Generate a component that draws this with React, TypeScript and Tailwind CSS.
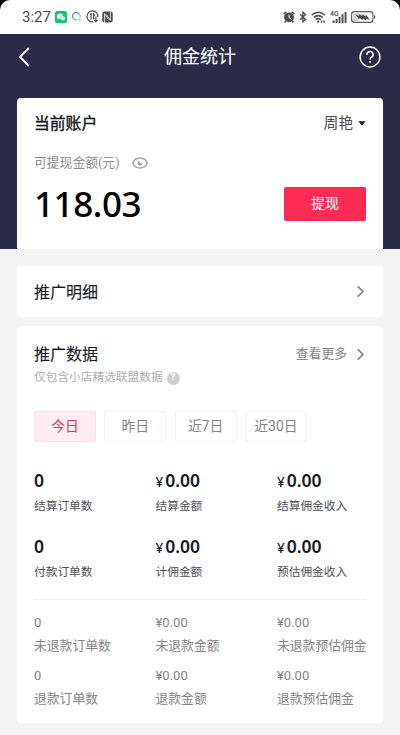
import React, { useState } from 'react';

interface Stat {
  value: string;
  label: string;
  money?: boolean;
}

const ranges = ['今日', '昨日', '近7日', '近30日'];

const mainStats: Stat[] = [
  { value: '0', label: '结算订单数' },
  { value: '0.00', label: '结算金额', money: true },
  { value: '0.00', label: '结算佣金收入', money: true },
  { value: '0', label: '付款订单数' },
  { value: '0.00', label: '计佣金额', money: true },
  { value: '0.00', label: '预估佣金收入', money: true },
];

const refundStats: Stat[] = [
  { value: '0', label: '未退款订单数' },
  { value: '0.00', label: '未退款金额', money: true },
  { value: '0.00', label: '未退款预估佣金', money: true },
  { value: '0', label: '退款订单数' },
  { value: '0.00', label: '退款金额', money: true },
  { value: '0.00', label: '退款预估佣金', money: true },
];

function ChevronRight() {
  return (
    <svg className="w-[9px] h-[13px] mr-px" viewBox="0 0 9 13" fill="none" stroke="#858585" strokeWidth={1.7}>
      <path d="M1.7 1.3 L7 6.5 L1.7 11.7" />
    </svg>
  );
}

function StatusBar() {
  return (
    <div className="bg-black">
      <div className="flex items-center justify-between h-[33.5px] pl-[22px] pr-[24px] rounded-t-[10px] bg-white text-[#4c4c4c]">
        <div className="flex items-center">
          <span className="text-[15px] leading-[18px] w-[33px]">3:27</span>
          {/* WeChat */}
          <svg className="w-3 h-3" viewBox="0 0 12 12">
            <rect width="12" height="12" rx="2.6" fill="#0bcb68" />
            <ellipse cx="4.9" cy="5" rx="3.1" ry="2.6" fill="#fff" />
            <path d="M2.9 6.8 L2.5 8.4 L4.4 7.4 Z" fill="#fff" />
            <ellipse cx="7.7" cy="7.2" rx="2.6" ry="2.2" fill="#fff" stroke="#0bcb68" strokeWidth=".5" />
            <g fill="#0bcb68">
              <circle cx="3.9" cy="4.4" r=".45" />
              <circle cx="5.9" cy="4.4" r=".45" />
              <circle cx="6.9" cy="6.8" r=".35" />
              <circle cx="8.5" cy="6.8" r=".35" />
            </g>
          </svg>
          {/* Chat ring */}
          <svg className="ml-[5px] w-[10px] h-[10px]" viewBox="0 0 10 10" fill="none" strokeWidth="1.1">
            <path d="M1.5 6.6 A3.6 3.4 0 0 1 6.8 1.7" stroke="#4b82c9" />
            <path d="M6.8 1.7 A3.5 3.4 0 0 1 8.2 5.2" stroke="#55b6c4" />
            <path d="M1.5 6.6 Q2.7 8.3 5.5 7.8" stroke="#6fbd8c" />
            <path d="M7.8 5.8 V8.8 M6.2 7.3 H9.3" stroke="#e9c56c" />
          </svg>
          {/* Data rate */}
          <svg className="ml-1 w-[13px] h-[13px]" viewBox="0 0 13 13" fill="none" stroke="#4c4c4c" strokeWidth="1.2">
            <path d="M7.2 11.9 A5.5 5.5 0 1 1 11.9 7.2" />
            <path d="M3.7 4.7 L5.1 3.8 V9.2 M7.5 3 V9.3 M7.5 6.4 L9 4.6 M9.9 6.5 V11.5 M8.2 10 L9.9 11.6 L11.6 10" />
          </svg>
          {/* NFC */}
          <svg className="ml-[3px] w-[11px] h-3" viewBox="0 0 11 12" fill="none">
            <rect x=".3" y=".4" width="10.4" height="11.2" rx="2" fill="#4c4c4c" />
            <path d="M2.6 11.6 V2.6 L6.4 8.4 M8.4 .4 V9.4 L4.6 3.6" stroke="#fff" strokeWidth=".8" />
          </svg>
        </div>

        <div className="flex items-center">
          {/* Alarm */}
          <svg className="w-3 h-3" viewBox="0 0 12 12">
            <circle cx="6" cy="6.3" r="4.9" fill="#4c4c4c" />
            <path d="M.6 3.2 L3.1 .9 M11.4 3.2 L8.9 .9 M2.8 10 L1.6 11.5 M9.2 10 L10.4 11.5" stroke="#4c4c4c" strokeWidth="1.5" />
            <path d="M6 3.6 V6.6 L8.3 8.1" fill="none" stroke="#fff" strokeWidth="1" />
          </svg>
          {/* Bluetooth */}
          <svg className="ml-1 w-2 h-3" viewBox="0 0 8 12" fill="none" stroke="#4c4c4c" strokeWidth="1.3">
            <path d="M1 3.2 L6.6 8.4 L3.9 10.8 V1.2 L6.6 3.6 L1 8.8" />
          </svg>
          {/* Wifi */}
          <svg className="ml-1 w-[15px] h-3" viewBox="0 0 15 12" fill="none" stroke="#4c4c4c" strokeWidth="1.5">
            <path d="M.6 4.2 Q7.3 -1.8 14 4.2 M2.8 6.6 Q7.3 2.7 11.8 6.6 M4.8 8.7 Q7.3 6.6 9.6 8.6" />
            <g fill="#4c4c4c" stroke="none">
              <circle cx="7.2" cy="10.6" r="1.2" />
              <rect x="9.7" y="9.7" width="1.6" height="2" />
              <rect x="12.3" y="9.7" width="1.6" height="2" />
            </g>
          </svg>
          {/* Mobile signal */}
          <div className="relative ml-1 w-[17px] h-3">
            <span className="absolute left-0 -top-px text-[7px] leading-[8px] font-medium">4G</span>
            <svg className="w-[17px] h-3" viewBox="0 0 17 12" fill="#4c4c4c">
              <rect x="2.6" y="9.4" width="1.9" height="2.6" />
              <rect x="5.6" y="8" width="1.9" height="4" />
              <rect x="8.6" y="5.8" width="1.9" height="6.2" />
              <rect x="11.6" y="3.2" width="1.9" height="8.8" />
              <rect x="14.6" y="1" width="1.9" height="11" />
            </svg>
          </div>
          {/* Battery */}
          <svg className="ml-1 w-[25px] h-3" viewBox="0 0 25 12">
            <rect x=".6" y=".6" width="21.3" height="10.8" rx="2.7" fill="#fff" stroke="#5a5a5a" strokeWidth="1.1" />
            <rect x="2" y="2" width="6.5" height="8" rx="1.4" fill="#d8d8d8" />
            <path d="M4 3.1 L8 5 L8.3 3 L11.2 4.9 L11.6 3 L14.6 5.4 L15 3.4 L19 9.2 L15.4 7.8 L15 9.4 L12.2 7.5 L11.5 9.1 L8.6 7.1 L8 8.2 Z" fill="#4c4c4c" />
            <rect x="23" y="4.2" width="1.2" height="3.6" rx=".6" fill="#5a5a5a" />
          </svg>
        </div>
      </div>
    </div>
  );
}

export default function App() {
  const [range, setRange] = useState('今日');

  return (
    <div className="w-[400px] h-[735px] overflow-hidden bg-[#f4f4f4] text-[#161823] font-[Roboto,'Noto_Sans_CJK_SC',sans-serif]">
      <StatusBar />

      {/* Header with account card */}
      <div className="h-[215.5px] bg-[#2a2b46] px-[17px]">
        <div className="flex items-center justify-between h-[64px] pb-[18px]">
          <svg className="ml-px w-3 h-[20px]" viewBox="0 0 12 20" fill="none" stroke="#fff" strokeWidth={1.8}>
            <path d="M10.8 1 L2 10 L10.8 19" />
          </svg>
          <h1 className="ml-[11px] text-[18px] leading-[24px] text-white [-webkit-text-stroke:0.1px]">佣金统计</h1>
          <svg className="mr-[2px] w-[22px] h-[22px]" viewBox="0 0 22 22" fill="none" stroke="#fff" strokeWidth={1.5}>
            <circle cx="11" cy="11" r="9.9" />
            <path d="M7.9 8.9 A3.1 3 0 1 1 12.5 11.2 Q11 12 11 13.6" />
            <circle cx="11" cy="15.9" r="1.05" fill="#fff" stroke="none" />
          </svg>
        </div>

        <div className="h-[151.5px] rounded-t-[4px] bg-white px-[17px] pt-[16px]">
          <div className="flex items-center justify-between h-5">
            <span className="text-[15.8px] [-webkit-text-stroke:0.4px]">当前账户</span>
            <div className="flex items-center text-[14.8px] text-[#4a4b50]">
              周艳
              <svg className="ml-[5px] w-2 h-[5px]" viewBox="0 0 8 5">
                <path d="M.3 .3 H7.7 L4 4.4 Z" fill="#161823" />
              </svg>
            </div>
          </div>
          <div className="flex items-center h-5 mt-[19px] text-[12.8px] text-[#8f8f8f]">
            可提现金额(元)
            <svg className="ml-[12px] mt-px w-4 h-3" viewBox="0 0 16 12" fill="none" stroke="#a0a0a0" strokeWidth={1.3}>
              <path d="M.8 6 C3.3 -.7 12.7 -.7 15.2 6 C12.7 12.7 3.3 12.7 .8 6 Z" />
              <path d="M7.4 3.8 A2.4 2.4 0 1 0 10.4 6.5 L8.2 6 Z" fill="#a0a0a0" stroke="none" />
            </svg>
          </div>
          <div className="flex items-center justify-between mt-[14px] h-[34px]">
            <span className="text-[35px] leading-[30px] font-medium tracking-[-0.4px] text-black font-['Noto_Sans',sans-serif]">118.03</span>
            <button className="w-[82px] h-[34px] rounded-[2px] bg-[#fe2c55] text-[13.8px] text-white [-webkit-text-stroke:0.1px]">提现</button>
          </div>
        </div>
      </div>

      {/* Promotion details */}
      <div className="flex items-center justify-between mx-[17px] mt-[17px] h-[51px] rounded-[4px] bg-white px-[17px]">
        <span className="pt-[2px] text-[16px] [-webkit-text-stroke:0.1px]">推广明细</span>
        <ChevronRight />
      </div>

      {/* Promotion data */}
      <div className="mx-[17px] mt-[9px] h-[397px] rounded-[4px] bg-white px-[17px] pt-[18px]">
        <div className="flex items-center justify-between h-5">
          <span className="pt-px text-[16px] [-webkit-text-stroke:0.1px]">推广数据</span>
          <div className="flex items-center gap-[9px] text-[12.8px] text-[#858585]">
            查看更多
            <ChevronRight />
          </div>
        </div>
        <div className="flex items-center h-4 mt-[6px] text-[11.7px] text-[#b0b0b0]">
          仅包含小店精选联盟数据
          <span className="ml-1 flex items-center justify-center w-[13px] h-[13px] rounded-full bg-[#cfcfd1] text-[9px] font-bold text-white">?</span>
        </div>

        <div className="flex gap-[8.3px] mt-[25px]">
          {ranges.map((item) => (
            <button
              key={item}
              onClick={() => setRange(item)}
              className={`w-[62px] h-[31px] rounded-[2px] border text-[13.8px] ${
                range === item ? 'bg-[#ffedf1] border-[#fbdfe5] text-[#d9376a]' : 'bg-white border-[#f1f1f1] text-[#858585]'
              }`}
            >
              {item}
            </button>
          ))}
        </div>

        <div className="grid grid-cols-[121.5px_121.5px_1fr] gap-y-[24px] mt-[27px]">
          {mainStats.map((stat) => (
            <div key={stat.label} className="whitespace-nowrap">
              <div className="h-6 text-[17.5px] leading-[22px] font-semibold font-['Noto_Sans',sans-serif]">
                {stat.money && <span className="mr-[2px] text-[13.5px] font-medium">¥</span>}
                {stat.value}
              </div>
              <div className="h-[18px] text-[11.7px] leading-[26px] text-[#505156]">{stat.label}</div>
            </div>
          ))}
        </div>

        <div className="mt-[22px] h-px bg-[#efefef]" />

        <div className="grid grid-cols-[121.5px_121.5px_1fr] gap-y-[13px] mt-[13px] text-[12.8px] text-[#858585]">
          {refundStats.map((stat) => (
            <div key={stat.label} className="whitespace-nowrap">
              <div className="h-5 text-[13px] leading-[20px]">
                {stat.money && '¥'}
                {stat.value}
              </div>
              <div className="h-5 leading-[25px]">{stat.label}</div>
            </div>
          ))}
        </div>
      </div>
    </div>
  );
}
